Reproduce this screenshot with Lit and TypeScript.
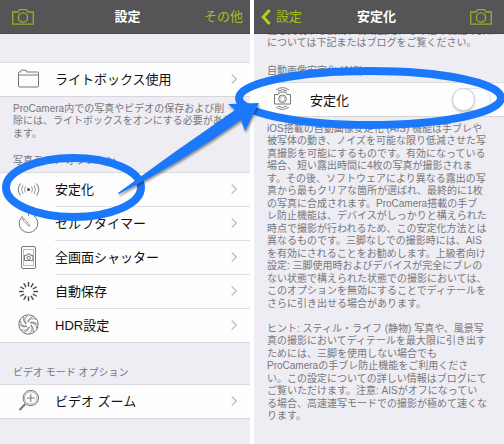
import { LitElement, html, css, svg } from "lit";
import { customElement } from "lit/decorators.js";

const icons: Record<string, unknown> = {
  folder: svg`<path d="M1.500 8h20v11q0 1-1 1h-18q-1 0-1-1zM1.500 8v-2q0-1 1-1h1.200v-1q0-.8.800-.8h4.200q.8 0 .8.800v1h11q1 0 1 1v2"/>`,
  waves: svg`<circle cx="11.500" cy="11.500" r="1.500" fill="#444" stroke="none"/><path stroke="#999" d="M8.500 8.500q-2 3 0 6M14.500 8.500q2 3 0 6M6 7q-3 4.500 0 9M17 7q3 4.500 0 9"/><path d="M3.500 5.500q-4.500 6 0 12M19.500 5.500q4.500 6 0 12"/>`,
  timer: svg`<path d="M6 3.800a9.300 9.300 0 1 0 11 0M11.500 .8v3"/><path stroke-width=".8" d="M5.500 6l2.500 1.500 5 6-1 .8-5.500-5.300z"/>`,
  phone: svg`<rect x="4.500" y=".5" width="14" height="22" rx="1.500"/><rect x="6.500" y="3.500" width="10" height="16" stroke="#bbb"/><path d="M7.500 9.500h2l.8-1.500h2.800l.8 1.500h2v5h-8.400z"/><circle cx="11.700" cy="11.800" r="1.600"/>`,
  spinner: svg`${[0, 30, 60, 90, 120, 150, 180, 210, 240, 270, 300, 330].map(
    (a) => svg`<path d="M11.500 2v4.500" stroke="#444" stroke-width="1.400" transform=${`rotate(${a} 11.500 11.500)`}/>`
  )}`,
  aperture: svg`<circle cx="11.500" cy="11.500" r="9.700"/>${[0, 60, 120, 180, 240, 300].map(
    (a) => svg`<path stroke-width=".8" d="M11 9q2.500-5 8-2.700M10.300 9.300q1.200-4.500 5.700-5.800" transform=${`rotate(${a} 11.500 11.500)`}/>`
  )}`,
  zoom: svg`<circle cx="13.800" cy="9" r="7.700"/><circle cx="13.800" cy="9" r="6.300" stroke="#aaa"/><path d="M13.800 5v8M9.800 9h8"/><path d="M8.300 15l-5.800 6" stroke-width="2"/>`,
  shake: svg`<path d="M3.500 7.500h3.500l1.500-2.500h6l1.500 2.500h3.500v9.500h-16z"/><circle cx="11.500" cy="11.800" r="3.800"/><circle cx="11.500" cy="11.800" r="2.500" stroke="#bbb"/><path stroke-width=".9" d="M5 3q6.500-4.800 13 0M7 4q4.500-3 9 0M5 20q6.500 4.800 13 0M7 19q4.500 3 9 0"/>`,
};

const icon = (name: string) =>
  html`<svg class="icon" viewBox="0 0 23 23" aria-hidden="true">${icons[name]}</svg>`;

const camera = html`<svg class="camera" viewBox="0 0 22 16" aria-hidden="true">
  <path d="M.7 3h5.300l1.500-2.300h7l1.500 2.300h5.300v12.200h-20.600z" />
  <circle cx="11" cy="8.500" r="4.600" />
</svg>`;

const lines = (text: string[]) =>
  html`<p class="note">${text.map((t) => html`<span>${t}</span>`)}</p>`;

const row = (name: string, label: string) => html`<li>
  <button class="row">
    ${icon(name)}
    <span class="cell">${label}
      <svg class="chevron" viewBox="0 0 6 10" aria-hidden="true"><path d="M.7 .5L5.300 5 .7 9.500" /></svg>
    </span>
  </button>
</li>`;

@customElement("app-root")
export class AppRoot extends LitElement {
  static styles = css`
    :host {
      display: block;
      position: relative;
      overflow: hidden;
      background: #fff;
      font-family: "Liberation Sans", "Noto Sans CJK JP", sans-serif;
      font-size: 13px;
      color: #111;
    }
    .screens {
      display: grid;
      grid-template-columns: 1fr 1fr;
      gap: 4px;
      min-height: 100vh;
    }
    .screen {
      min-width: 0;
      background: #eeedf3;
    }
    .bar {
      display: grid;
      grid-template-columns: 1fr auto 1fr;
      align-items: center;
      box-sizing: border-box;
      height: 34px;
      padding: 0 12px;
      background: #555557;
      border-bottom: 1px solid #474749;
      color: #fff;
    }
    .left .bar {
      padding-right: 7px;
    }
    .right .bar {
      padding-left: 7px;
    }
    h1 {
      margin: 0;
      font-size: 13px;
      font-weight: 700;
      line-height: 20px;
    }
    button {
      border: 0;
      margin: 0;
      padding: 0;
      background: none;
      font: inherit;
      color: inherit;
      text-align: left;
    }
    .action {
      display: flex;
      align-items: center;
      gap: 5px;
      color: #a5bd1e;
      line-height: 20px;
    }
    .end {
      justify-self: end;
    }
    .camera {
      display: block;
      width: 22px;
      height: 16px;
      fill: none;
      stroke: #98af22;
      stroke-width: 1.3;
    }
    .back {
      width: 10px;
      height: 16px;
      fill: none;
      stroke: #b4d212;
      stroke-width: 3;
    }
    .left .body {
      padding-top: 28px;
    }
    ul {
      list-style: none;
      margin: 0;
      padding: 0;
      border-top: 1px solid #dcdce0;
      background: #fdfdfd;
    }
    .row {
      display: flex;
      align-items: center;
      gap: 15px;
      box-sizing: border-box;
      width: 100%;
      height: 34px;
      padding-left: 17px;
    }
    .cell {
      flex: 1;
      display: flex;
      align-items: center;
      justify-content: space-between;
      box-sizing: border-box;
      height: 34px;
      padding: 0 13px 2px 0;
      border-bottom: 1px solid #dfdfe3;
    }
    li:last-child .row {
      border-bottom: 1px solid #d6d6da;
    }
    li:last-child .cell {
      height: 33px;
      border-bottom: 0;
    }
    .icon {
      flex: none;
      width: 23px;
      height: 23px;
      margin-bottom: 2px;
      fill: none;
      stroke: #777;
      stroke-width: 1;
    }
    .right .row {
      gap: 16px;
    }
    .right .cell {
      padding-bottom: 0;
    }
    .chevron {
      width: 6px;
      height: 10px;
      fill: none;
      stroke: #c0c0c5;
      stroke-width: 1.4;
    }
    .note {
      display: grid;
      grid-auto-rows: 12px 13px;
      margin: 0;
      padding: 6px 0 0 13px;
      font-size: 10px;
      line-height: 12px;
      color: #77777c;
      white-space: nowrap;
    }
    .note + .note {
      padding-top: 13px;
    }
    .intro .note {
      align-content: end;
      height: 16px;
      padding-top: 0;
      overflow: hidden;
    }
    h2 {
      margin: 0;
      padding: 15px 0 5px 13px;
      font-size: 10px;
      font-weight: 400;
      line-height: 12px;
      color: #77777c;
    }
    ul + h2 {
      padding-top: 24px;
    }
    .switch {
      appearance: none;
      display: flex;
      box-sizing: border-box;
      width: 39px;
      height: 23px;
      margin: 0;
      border: 1px solid #e2e2e4;
      border-radius: 12px;
      background: #fdfdfd;
    }
    .switch::before {
      content: "";
      width: 21px;
      height: 21px;
      border-radius: 50%;
      background: #fff;
      box-shadow: 0 0 0 1px #d4d4d4, 0 2px 3px #aaa;
    }
    .switch:checked {
      justify-content: flex-end;
      background: #a5bd1e;
    }
    .marks {
      position: absolute;
      left: 0;
      top: 0;
      width: 100%;
      height: 444px;
      pointer-events: none;
    }
    .ring {
      fill: none;
      stroke: #1c78fb;
      stroke-width: 8;
    }
    .arrow {
      fill: #1c78fb;
      filter: drop-shadow(1px 2px 1px #0006);
    }
  `;

  render() {
    return html`
      <main class="screens">
        <section class="screen left">
          <header class="bar">
            <button class="action" aria-label="カメラ">${camera}</button>
            <h1>設定</h1>
            <button class="action end">その他</button>
          </header>
          <div class="body">
            <ul>${row("folder", "ライトボックス使用")}</ul>
            ${lines([
              "ProCamera内での写真やビデオの保存および削",
              "除には、ライトボックスをオンにする必要があり",
              "ます。",
            ])}
            <h2>写真モード オプション</h2>
            <ul>
              ${row("waves", "安定化")}
              ${row("timer", "セルフタイマー")}
              ${row("phone", "全画面シャッター")}
              ${row("spinner", "自動保存")}
              ${row("aperture", "HDR設定")}
            </ul>
            <h2>ビデオ モード オプション</h2>
            <ul>${row("zoom", "ビデオ ズーム")}</ul>
          </div>
        </section>

        <section class="screen right">
          <header class="bar">
            <button class="action">
              <svg class="back" viewBox="0 0 10 16" aria-hidden="true"><path d="M8.700 1L2.200 8l6.500 7" /></svg>設定
            </button>
            <h1>安定化</h1>
            <button class="action end" aria-label="カメラ">${camera}</button>
          </header>
          <div class="intro">
            ${lines([
              "能を実現する技術、初期設定、その他の機能の詳細",
              "については下記またはブログをご覧ください。",
            ])}
          </div>
          <h2>自動画像安定化 (AIS)</h2>
          <ul>
            <li>
              <div class="row">
                ${icon("shake")}
                <span class="cell">
                  <label for="ais">安定化</label>
                  <input class="switch" id="ais" type="checkbox" role="switch" />
                </span>
              </div>
            </li>
          </ul>
          ${lines([
            "iOS搭載の自動画像安定化 (AIS) 機能は手ブレや",
            "被写体の動き、ノイズを可能な限り低減させた写",
            "真撮影を可能にするものです。有効になっている",
            "場合、短い露出時間に4枚の写真が撮影されま",
            "す。その後、ソフトウェアにより異なる露出の写",
            "真から最もクリアな箇所が選ばれ、最終的に1枚",
            "の写真に合成されます。ProCamera搭載の手ブ",
            "レ防止機能は、デバイスがしっかりと構えられた",
            "時点で撮影が行われるため、この安定化方法とは",
            "異なるものです。三脚なしでの撮影時には、AIS",
            "を有効にされることをお勧めします。上級者向け",
            "設定: 三脚使用時およびデバイスが完全にブレの",
            "ない状態で構えられた状態での撮影においては、",
            "このオプションを無効にすることでディテールを",
            "さらに引き出せる場合があります。",
          ])}
          ${lines([
            "ヒント: スティル・ライフ (静物) 写真や、風景写",
            "真の撮影においてディテールを最大限に引き出す",
            "ためには、三脚を使用しない場合でも",
            "ProCameraの手ブレ防止機能をご利用くださ",
            "い。この設定についての詳しい情報はブログにて",
            "ご覧いただけます。注意: AISがオフになってい",
            "る場合、高速連写モードでの撮影が極めて速くな",
            "ります。",
          ])}
        </section>
      </main>
      <svg class="marks" viewBox="0 0 504 444" preserveAspectRatio="none" aria-hidden="true">
        <ellipse class="ring" cx="73.500" cy="187.500" rx="67.500" ry="29.500" />
        <ellipse class="ring" cx="370" cy="98" rx="131" ry="27" />
        <path class="arrow" d="M118 193Q175 151 235 110L228 104 259 103 245 131 241 120Q180 163 119 194z" />
      </svg>
    `;
  }
}
